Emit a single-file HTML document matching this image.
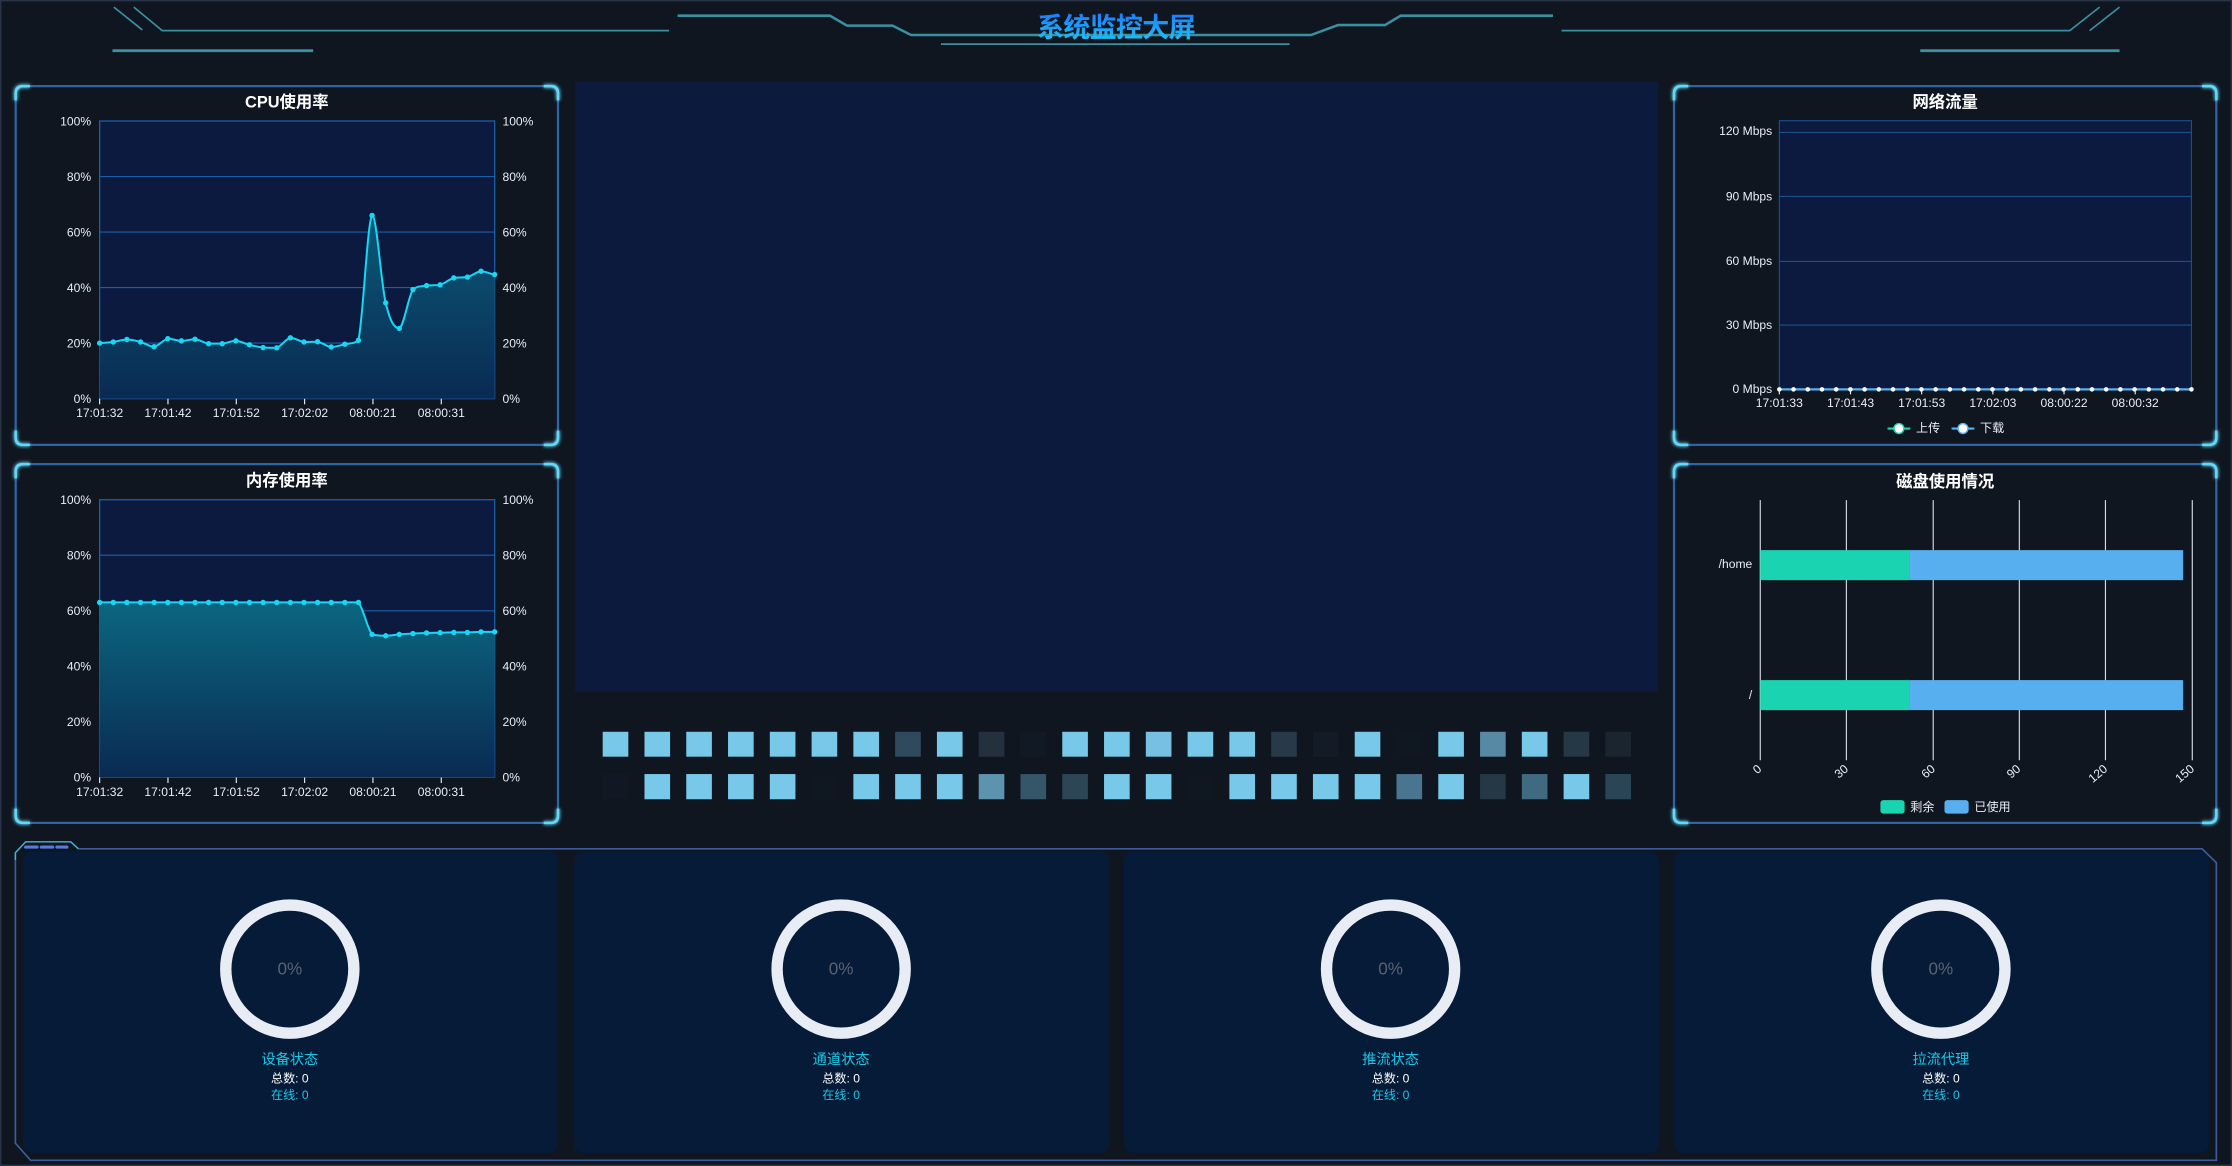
<!DOCTYPE html>
<html><head><meta charset="utf-8">
<style>
html,body{margin:0;padding:0;background:#0f1620;overflow:hidden;}
svg{display:block;}
text{font-family:"Liberation Sans","Noto Sans CJK SC",sans-serif;}
</style></head>
<body>
<svg id="s" width="2232" height="1166" viewBox="0 0 1568 819" preserveAspectRatio="none" xmlns="http://www.w3.org/2000/svg">
<defs>
<linearGradient id="cpuF" x1="0" y1="0" x2="0" y2="1"><stop offset="0" stop-color="#0b5a78"/><stop offset="1" stop-color="#0a2a52"/></linearGradient>
<linearGradient id="memF" x1="0" y1="0" x2="0" y2="1"><stop offset="0" stop-color="#0b6680"/><stop offset="1" stop-color="#0a2a52"/></linearGradient>
<linearGradient id="tt" x1="0" y1="0" x2="0" y2="1"><stop offset="0" stop-color="#1a7cff"/><stop offset="1" stop-color="#1ec8f0"/></linearGradient>
<filter id="gl"><feGaussianBlur stdDeviation="1.2"/></filter>
</defs>
<rect x="0" y="0" width="1568" height="819" fill="#0f1620"/>
<rect x="0.5" y="0.5" width="1567" height="818" fill="none" stroke="#2a3448" stroke-width="1"/>

<g stroke="#3a8fa0" fill="none" stroke-width="1.2">
<path d="M80 5 L100 21 M94 5 L114 21.5 L470 21.5"/>
<path d="M79 35.6 L220 35.6" stroke-width="2"/>
<path d="M476 11 L583 11 L595 18 L627 18 L640 24.6 L921 24.6 L940 17.6 L973 17.6 L984 11 L1091 11" stroke-width="1.8"/>
<path d="M661 31 L906 31"/>
<path d="M1097 21.5 L1454 21.5 L1475 5 M1468 21.5 L1489 5"/>
<path d="M1349 35.6 L1489 35.6" stroke-width="2"/>
</g>
<text x="784" y="26" text-anchor="middle" font-size="19" font-weight="bold" fill="url(#tt)" letter-spacing="-0.5">系统监控大屏</text>

<g id="panels"></g>

<text x="201.5" y="75.5" text-anchor="middle" font-size="11.5" font-weight="bold" fill="#fff">CPU使用率</text>
<rect x="70" y="85" width="277.5" height="195" fill="#0b1a3e"/>
<g id="cpuG"></g>
<text x="201.5" y="341.5" text-anchor="middle" font-size="11.5" font-weight="bold" fill="#fff">内存使用率</text>
<rect x="70" y="351" width="277.5" height="195" fill="#0b1a3e"/>
<g id="memG"></g>

<rect x="404" y="57" width="761" height="429" fill="#0b1a3d"/>
<g id="sq"></g>

<text x="1366.5" y="75.5" text-anchor="middle" font-size="11.5" font-weight="bold" fill="#fff">网络流量</text>
<rect x="1250" y="84.8" width="289.5" height="188.7" fill="#0b1a3e" stroke="#1c4f8a" stroke-width="0.8"/>
<g stroke="#1c4f8a" stroke-width="0.8">
<line x1="1250" y1="93" x2="1539.5" y2="93"/><line x1="1250" y1="138" x2="1539.5" y2="138"/>
<line x1="1250" y1="183.6" x2="1539.5" y2="183.6"/><line x1="1250" y1="228.3" x2="1539.5" y2="228.3"/>
</g>
<g font-size="8.5" fill="#e8eef5" text-anchor="end">
<text x="1245" y="95">120 Mbps</text><text x="1245" y="141">90 Mbps</text><text x="1245" y="186">60 Mbps</text><text x="1245" y="231">30 Mbps</text><text x="1245" y="276">0 Mbps</text>
</g>
<g font-size="8.5" fill="#e8eef5" text-anchor="middle">
<text x="1250" y="286">17:01:33</text><text x="1300" y="286">17:01:43</text><text x="1350" y="286">17:01:53</text><text x="1400" y="286">17:02:03</text><text x="1450" y="286">08:00:22</text><text x="1500" y="286">08:00:32</text>
</g>
<line x1="1250" y1="273.5" x2="1539.5" y2="273.5" stroke="#5ab0f0" stroke-width="1.5"/>
<g id="netD"></g>
<g>
<line x1="1326" y1="301" x2="1342" y2="301" stroke="#1ad3b0" stroke-width="1.5"/><circle cx="1334" cy="301" r="3.5" fill="#fff" stroke="#1ad3b0"/>
<text x="1346" y="303.5" font-size="8.5" fill="#e8eef5">上传</text>
<line x1="1371" y1="301" x2="1387" y2="301" stroke="#5ab0f0" stroke-width="1.5"/><circle cx="1379" cy="301" r="3.5" fill="#fff" stroke="#5ab0f0"/>
<text x="1391" y="303.5" font-size="8.5" fill="#e8eef5">下载</text>
</g>

<text x="1366.5" y="342" text-anchor="middle" font-size="11.5" font-weight="bold" fill="#fff">磁盘使用情况</text>
<g stroke="#d8dce4" stroke-width="0.8">
<line x1="1236.6" y1="351.3" x2="1236.6" y2="534"/><line x1="1297.1" y1="351.3" x2="1297.1" y2="534"/><line x1="1358.1" y1="351.3" x2="1358.1" y2="534"/><line x1="1418.6" y1="351.3" x2="1418.6" y2="534"/><line x1="1479.1" y1="351.3" x2="1479.1" y2="534"/><line x1="1540.1" y1="351.3" x2="1540.1" y2="534"/>
</g>
<rect x="1236.6" y="386.4" width="104.8" height="21.1" fill="#1ad3b0"/><rect x="1341.4" y="386.4" width="192.3" height="21.1" fill="#58aff0"/>
<rect x="1236.6" y="477.7" width="104.8" height="21.1" fill="#1ad3b0"/><rect x="1341.4" y="477.7" width="192.3" height="21.1" fill="#58aff0"/>
<g font-size="8.5" fill="#e8eef5" text-anchor="end">
<text x="1231" y="399">/home</text><text x="1231" y="491">/</text>
</g>
<g font-size="8.5" fill="#e8eef5" text-anchor="end">
<text transform="translate(1238,541) rotate(-40)">0</text>
<text transform="translate(1299,541) rotate(-40)">30</text>
<text transform="translate(1360,541) rotate(-40)">60</text>
<text transform="translate(1420,541) rotate(-40)">90</text>
<text transform="translate(1481,541) rotate(-40)">120</text>
<text transform="translate(1542,541) rotate(-40)">150</text>
</g>
<rect x="1321" y="562" width="17" height="9.5" rx="2" fill="#1ad3b0"/><text x="1342" y="569.5" font-size="8.5" fill="#e8eef5">剩余</text>
<rect x="1366" y="562" width="17" height="9.5" rx="2" fill="#58aff0"/><text x="1387" y="569.5" font-size="8.5" fill="#e8eef5">已使用</text>

<path d="M55.1 596.2 L1547 596.2 L1557 606 L1557 815 L21.5 815 L10.8 803 L10.8 599" fill="none" stroke="#3d5a9a" stroke-width="1.2"/>
<path d="M10.8 604 L10.8 599 L18 591.3 L49.7 591.3 L55.1 596.2" fill="none" stroke="#3fb8d8" stroke-width="1"/>
<g stroke="#5a78dd" stroke-width="2.2" stroke-linecap="round"><line x1="18" y1="595" x2="26" y2="595"/><line x1="29" y1="595" x2="37" y2="595"/><line x1="40" y1="595" x2="47" y2="595"/></g>
<g id="cards"></g>
</svg>
<script>
var NS="http://www.w3.org/2000/svg";
function el(t,a,p){var e=document.createElementNS(NS,t);for(var k in a)e.setAttribute(k,a[k]);(p||document.getElementById('s')).appendChild(e);return e;}
function g(id){return document.getElementById(id);}
[[11,60.5],[11,326],[1176,60.5],[1176,326]].forEach(function(p){
 var P=g('panels'),x=p[0],y=p[1],w=381,h=252;
 el('rect',{x:x,y:y,width:w,height:h,rx:6,fill:'none',stroke:'#2d64a6','stroke-width':1.6},P);
 var c='#63d8f6',L=10;
 var d='M'+x+' '+(y+L)+' L'+x+' '+(y+5)+' Q'+x+' '+y+' '+(x+5)+' '+y+' L'+(x+L)+' '+y+
 ' M'+(x+w-L)+' '+y+' L'+(x+w-5)+' '+y+' Q'+(x+w)+' '+y+' '+(x+w)+' '+(y+5)+' L'+(x+w)+' '+(y+L)+
 ' M'+(x+w)+' '+(y+h-L)+' L'+(x+w)+' '+(y+h-5)+' Q'+(x+w)+' '+(y+h)+' '+(x+w-5)+' '+(y+h)+' L'+(x+w-L)+' '+(y+h)+
 ' M'+(x+L)+' '+(y+h)+' L'+(x+5)+' '+(y+h)+' Q'+x+' '+(y+h)+' '+x+' '+(y+h-5)+' L'+x+' '+(y+h-L);
 el('path',{d:d,fill:'none',stroke:c,'stroke-width':3,filter:'url(#gl)',opacity:0.8},P);
 el('path',{d:d,fill:'none',stroke:c,'stroke-width':1.8},P);
});
function cl(v,a,b){var lo=Math.min(a,b),hi=Math.max(a,b);return Math.max(lo,Math.min(hi,v));}
function chart(G,top,vals,fill){
 G=g(G);var bot=top+195,x0=70,x1=347.5,dx=(x1-x0)/29;
 for(var i=1;i<5;i++){var yy=top+i*39;el('line',{x1:x0,y1:yy,x2:x1,y2:yy,stroke:'#1d5ea8','stroke-width':0.8},G);}
 el('rect',{x:x0,y:top,width:x1-x0,height:195,fill:'none',stroke:'#1d5ea8','stroke-width':0.9},G);
 var labs=['100%','80%','60%','40%','20%','0%'];
 for(i=0;i<6;i++){var yy=top+i*39+3;
  var t=el('text',{x:64,y:yy,'font-size':8.5,fill:'#e8eef5','text-anchor':'end'},G);t.textContent=labs[i];
  t=el('text',{x:353,y:yy,'font-size':8.5,fill:'#e8eef5'},G);t.textContent=labs[i];}
 var xl=['17:01:32','17:01:42','17:01:52','17:02:02','08:00:21','08:00:31'];
 for(i=0;i<6;i++){var xx=x0+i*48;el('line',{x1:xx,y1:bot,x2:xx,y2:bot+4,stroke:'#e8eef5','stroke-width':0.8},G);
  var t=el('text',{x:xx,y:bot+13,'font-size':8.5,fill:'#e8eef5','text-anchor':'middle'},G);t.textContent=xl[i];}
 var pts=vals.map(function(v,i){return [x0+i*dx,bot-v*1.95];});
 var d='M'+pts[0][0]+' '+pts[0][1];
 for(i=0;i<pts.length-1;i++){var p0=pts[Math.max(0,i-1)],p1=pts[i],p2=pts[i+1],p3=pts[Math.min(pts.length-1,i+2)];
  var tn=0.35;
  var c1y=cl(p1[1]+(p2[1]-p0[1])*tn/2,p1[1],p2[1]);
  var c2y=cl(p2[1]-(p3[1]-p1[1])*tn/2,p1[1],p2[1]);
  d+=' C'+(p1[0]+dx*tn)+' '+c1y+' '+(p2[0]-dx*tn)+' '+c2y+' '+p2[0]+' '+p2[1];}
 el('path',{d:d+' L'+x1+' '+bot+' L'+x0+' '+bot+' Z',fill:fill},G);
 el('path',{d:d,fill:'none',stroke:'#17d8f4','stroke-width':1.4},G);
 pts.forEach(function(p){el('circle',{cx:p[0],cy:p[1],r:1.9,fill:'#17d8f4'},G);});
}
chart('cpuG',85,[20,20.4,21.3,20.4,18.7,21.6,20.8,21.4,19.8,19.8,20.8,19.4,18.4,18.3,21.9,20.4,20.5,18.6,19.6,21,66,34.5,25.3,39.3,40.7,41,43.5,43.8,45.9,44.7],'url(#cpuF)');
chart('memG',351,[63,63,63,63,63,63,63,63,63,63,63,63,63,63,63,63,63,63,63,63,51.5,51,51.5,51.8,52,52.1,52.2,52.2,52.4,52.4],'url(#memF)');
for(var i=0;i<30;i++){var xx=1250+i*9.983;el('circle',{cx:xx,cy:273.5,r:1.6,fill:'#fff'},g('netD'));}
[1250,1300,1350,1400,1450,1500].forEach(function(x){el('line',{x1:x,y1:273.5,x2:x,y2:277,stroke:'#e8eef5','stroke-width':0.8},g('netD'));});
var L='#78c8ea';
var r1=[L,L,L,L,L,L,L,'#2f4a5c',L,'#22303f','#111a24',L,L,'#78bfe4',L,L,'#263a4a','#131c26',L,'#0f1720',L,'#5889a4',L,'#243846','#1b2530'];
var r2=['#111823',L,L,L,L,'#0f1720',L,L,L,'#5e93b0','#355568','#2d4656',L,L,'#0f1720',L,L,L,L,'#4a7590',L,'#243846','#3f6a80',L,'#2a4656'];
for(i=0;i<25;i++){var xx=423.4+i*29.35;
 el('rect',{x:xx,y:514,width:18,height:17.5,fill:r1[i]},g('sq'));
 el('rect',{x:xx,y:543.7,width:18,height:17.7,fill:r2[i]},g('sq'));}
var cards=[[16.1,'设备状态'],[403.4,'通道状态'],[789.4,'推流状态'],[1176,'拉流代理']];
cards.forEach(function(c){var G=g('cards'),x=c[0],w=376,cx=x+187.5;
 el('rect',{x:x,y:598,width:w,height:212,rx:7,fill:'#061b38'},G);
 el('circle',{cx:cx,cy:680.7,r:45,fill:'none',stroke:'#e8ecf5','stroke-width':8},G);
 var t=el('text',{x:cx,y:684.5,'font-size':12,fill:'#5a6270','text-anchor':'middle'},G);t.textContent='0%';
 t=el('text',{x:cx,y:747.5,'font-size':10,fill:'#18c8e8','text-anchor':'middle'},G);t.textContent=c[1];
 t=el('text',{x:cx,y:760.5,'font-size':8.5,fill:'#ffffff','text-anchor':'middle'},G);t.textContent='总数: 0';
 t=el('text',{x:cx,y:772,'font-size':8.5,fill:'#18c8e8','text-anchor':'middle'},G);t.textContent='在线: 0';
});
</script>
</body></html>
